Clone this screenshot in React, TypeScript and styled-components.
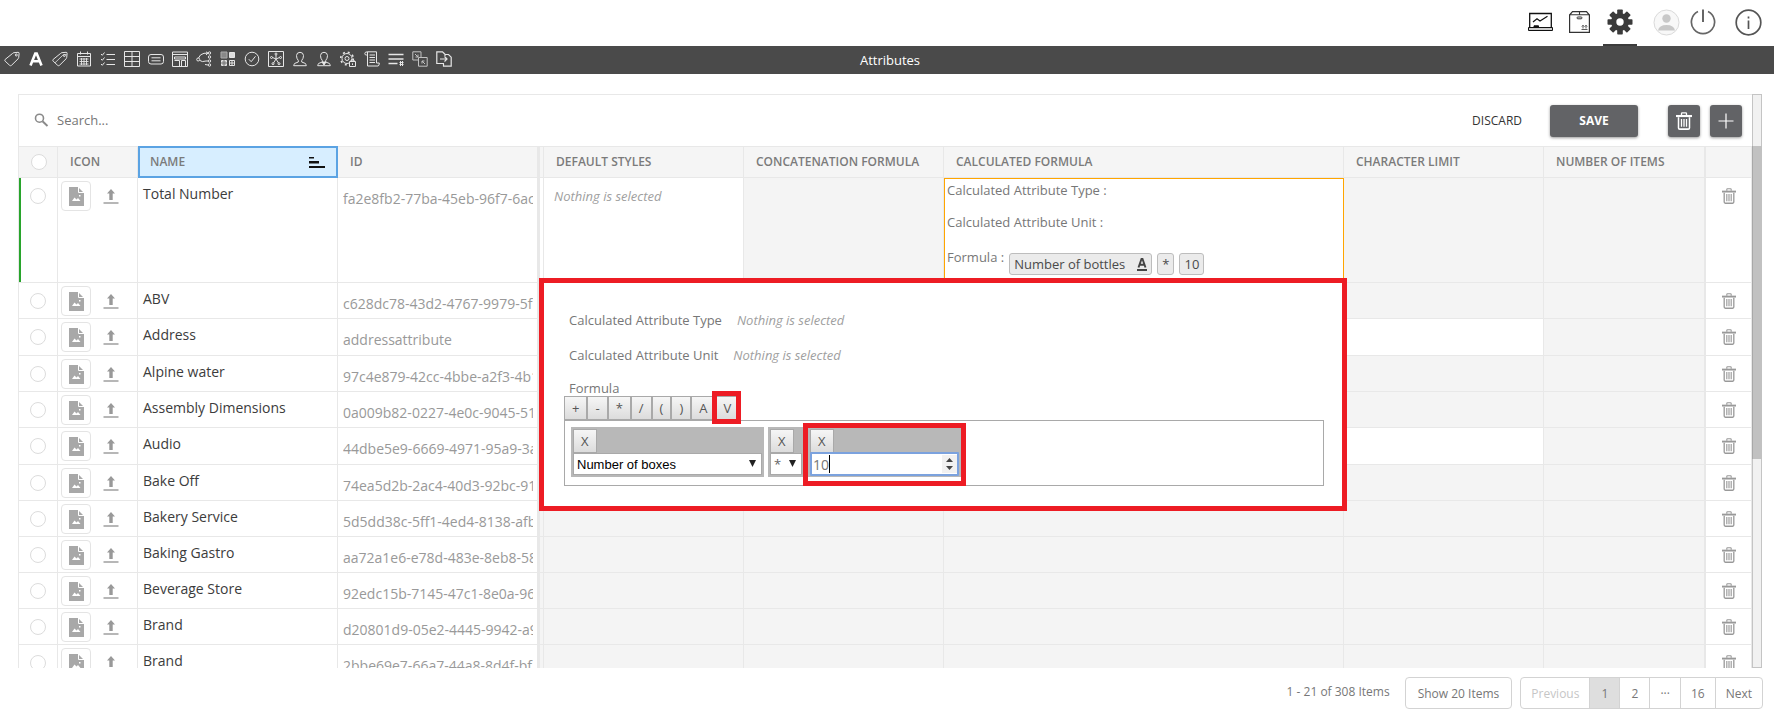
import React from "react";
import styled, { createGlobalStyle, css } from "styled-components";

const sans = `"Open Sans", "Noto Sans", "Liberation Sans", sans-serif`;

const GlobalStyle = createGlobalStyle`
  *, *::before, *::after { box-sizing: border-box; }
  body {
    margin: 0;
    background: #fff;
    color: #777;
    font-family: ${sans};
    font-size: 13px;
    line-height: 20px;
  }
  button, input, select { font-family: inherit; margin: 0; }
  svg { flex: none; }
`;

const Page = styled.div`
  height: 100vh;
  display: flex;
  flex-direction: column;
`;

/* ---------- top navigation ---------- */

const TopNav = styled.nav`
  display: flex;
  justify-content: flex-end;
  height: 46px;
  padding-right: 4px;
`;

const UserTools = styled.div`
  display: flex;
  padding-left: 15px;
`;

const NavButton = styled.button<{ $width: number; $active?: boolean }>`
  width: ${(p) => p.$width}px;
  height: 46px;
  padding: 0;
  display: flex;
  align-items: center;
  justify-content: center;
  border: 0;
  border-bottom: 2px solid ${(p) => (p.$active ? "#3c3c3c" : "transparent")};
  background: none;
`;

const TitleBar = styled.header`
  display: grid;
  grid-template-columns: 1fr auto 1fr;
  align-items: center;
  height: 28px;
  background: #4a4a4a;
  color: #fff;
`;

const ModuleList = styled.div`
  display: flex;
  padding-bottom: 2px;
`;

const ModuleButton = styled.button`
  flex: none;
  width: 24px;
  height: 24px;
  padding: 0;
  border: 0;
  background: none;
  display: flex;
  align-items: center;
  justify-content: center;
`;

const Title = styled.h1`
  margin: 0;
  padding-left: 6px;
  font-size: 13px;
  font-weight: 400;
`;

/* ---------- grid shell ---------- */

const GridArea = styled.main`
  flex: 1;
  min-height: 0;
  display: flex;
  margin: 20px 12px 0 18px;
`;

const GridPanel = styled.section`
  flex: 1;
  min-width: 0;
  overflow: hidden;
  border: 1px solid #e8e8e8;
  border-width: 1px 0 0 1px;
`;

const Toolbar = styled.div`
  display: flex;
  align-items: center;
  height: 52px;
  padding: 0 10px 0 15px;
  border-bottom: 1px solid #e8e8e8;
`;

const SearchLabel = styled.label`
  flex: 1;
  display: flex;
  align-items: center;
  gap: 8px;
  padding-bottom: 2px;
`;

const SearchInput = styled.input`
  flex: 1;
  border: 0;
  padding: 0;
  background: none;
  font-size: 13px;
  color: #777;
  &::placeholder { color: #777; opacity: 1; }
`;

const DiscardButton = styled.button`
  height: 32px;
  padding: 0 28px;
  border: 0;
  background: none;
  color: #333;
  font-size: 12px;
`;

const DarkButton = styled.button<{ $width: number }>`
  width: ${(p) => p.$width}px;
  height: 32px;
  padding: 0;
  display: flex;
  align-items: center;
  justify-content: center;
  border: 0;
  border-radius: 3px;
  background: #626366;
  box-shadow: 0 1px 3px rgba(0, 0, 0, 0.4);
  color: #fff;
  font-size: 12px;
  font-weight: 700;
`;

const IconActions = styled.div`
  display: flex;
  gap: 10px;
  margin-left: 30px;
`;

const ScrollTrack = styled.div`
  flex: none;
  width: 10px;
  padding-top: 51px;
  background: #f1f1f1;
  border: 1px solid #c4c4c4;
`;

const ScrollThumb = styled.div`
  height: 60%;
  max-height: 313px;
  margin: 0 -1px;
  background: #c1c1c1;
  border-left: 1px solid #a8a8a8;
`;

/* ---------- table ---------- */

const Table = styled.table`
  width: 100%;
  table-layout: fixed;
  border-collapse: separate;
  border-spacing: 0;
`;

const line = css`
  border: 0 solid #e8e8e8;
  border-right-width: 1px;
  border-bottom-width: 1px;
`;

const HeadCell = styled.th<{ $selected?: boolean; $edge?: number }>`
  ${line}
  position: relative;
  height: 31px;
  padding: 0 12px;
  border-right-width: ${(p) => p.$edge ?? 1}px;
  background: ${(p) => (p.$selected ? "#d7eeff" : "#f5f5f5")};
  color: #7b7b7b;
  font-size: 12px;
  font-weight: 600;
  text-align: left;
  white-space: nowrap;
  ${(p) =>
    p.$selected &&
    css`
      &::after {
        content: "";
        position: absolute;
        inset: -1px -1px -1px 0;
        border: 2px solid #5ba3e3;
      }
    `}
`;

const HeadInner = styled.span`
  display: flex;
  align-items: center;
  justify-content: space-between;
`;

const Row = styled.tr<{ $height: number }>`
  height: ${(p) => p.$height}px;
`;

const Cell = styled.td<{ $off?: boolean; $edge?: number; $marked?: boolean }>`
  ${line}
  padding: 0;
  border-right-width: ${(p) => p.$edge ?? 1}px;
  background: ${(p) => (p.$off ? "#f4f4f4" : "#fff")};
  box-shadow: ${(p) => (p.$marked ? "inset 2px 0 0 #28a42c" : "none")};
  vertical-align: top;
`;

const PickBox = styled.input`
  appearance: none;
  display: block;
  width: 16px;
  height: 16px;
  margin: 10px auto 0;
  border: 1px solid #dcdcdc;
  border-radius: 50%;
  background: #fff;
`;

const HeadPickBox = styled(PickBox)`
  margin: 0 auto;
`;

const IconPair = styled.div`
  display: flex;
  align-items: center;
  gap: 12px;
  padding: 3px 0 0 3px;
`;

const ThumbButton = styled.button`
  width: 30px;
  height: 30px;
  padding: 0;
  display: flex;
  align-items: center;
  justify-content: center;
  border: 1px solid #e4e4e4;
  border-radius: 4px;
  background: #fff;
`;

const PlainButton = styled.button`
  padding: 0;
  border: 0;
  background: none;
  display: flex;
`;

const NameText = styled.div`
  padding: 6px 5px 0;
  color: #3c3c3c;
  font-size: 14px;
  white-space: nowrap;
`;

const IdText = styled.div`
  margin: 11px 4px 0 5px;
  overflow: hidden;
  color: #999;
  font-size: 14px;
  white-space: nowrap;
`;

const Hint = styled.em`
  color: #a0a0a0;
`;

const StyleHint = styled.div`
  padding: 8px 10px 0;
`;

const TrashSlot = styled.div`
  display: flex;
  justify-content: center;
  padding-top: 10px;
`;

/* ---------- calculated formula cell ---------- */

const FormulaCell = styled.td`
  position: relative;
  padding: 1px 2px;
  border: 1px solid #ffa500;
  background: #fff;
  vertical-align: top;
`;

const FormulaLines = styled.div`
  display: flex;
  flex-direction: column;
  gap: 12px;
`;

const FormulaLine = styled.div`
  display: flex;
`;

const FormulaRow = styled(FormulaLine)`
  gap: 5px;
  padding-top: 3px;
`;

const Tag = styled.span`
  display: flex;
  align-items: center;
  gap: 12px;
  height: 22px;
  margin-top: 6px;
  padding: 0 4px;
  border: 1px solid #bdbdbd;
  border-radius: 3px;
  background: #ebebeb;
  color: #4a4a4a;
`;

const Popup = styled.div`
  position: absolute;
  z-index: 2;
  top: 99px;
  right: -4px;
  width: 808px;
  height: 233px;
  padding: 27px 18px 0 20px;
  border: 5px solid #ed1c24;
  background: #fff;
`;

const PopupRow = styled.div`
  display: flex;
  gap: 15px;
  height: 35px;
  padding-left: 5px;
`;

const PopupLabel = styled.div`
  padding-left: 5px;
  line-height: 16px;
`;

const OperatorBar = styled.div`
  display: flex;
`;

const GreyButton = styled.button`
  height: 24px;
  padding: 0 7px;
  border: 1px solid #a9a9a9;
  background: linear-gradient(#f6f6f6, #dcdcdc);
  color: #555;
  font-size: 13px;
  line-height: 20px;
`;

const Marked = styled.div<{ $inset: string }>`
  position: relative;
  display: flex;
  &::after {
    content: "";
    position: absolute;
    inset: ${(p) => p.$inset};
    border: 5px solid #ed1c24;
    pointer-events: none;
  }
`;

const Editor = styled.div`
  display: flex;
  gap: 4px;
  height: 66px;
  padding: 6px;
  border: 1px solid #a9a9a9;
`;

const Block = styled.div<{ $width: number }>`
  width: ${(p) => p.$width}px;
  height: 50px;
  padding: 2px;
  background: #b8b8b8;
`;

const FieldWrap = styled.div`
  position: relative;
  display: flex;
  align-items: center;
  height: 22px;
`;

const BlockSelect = styled.select<{ $system?: boolean }>`
  appearance: none;
  flex: 1;
  min-width: 0;
  height: 22px;
  padding: 0 3px;
  border: 1px solid #a9a9a9;
  border-radius: 0;
  background: #fff;
  color: ${(p) => (p.$system ? "#000" : "#666")};
  font-family: ${(p) => (p.$system ? `"Liberation Sans", sans-serif` : "inherit")};
  font-size: 13px;
`;

const Arrow = styled.svg`
  position: absolute;
  right: 6px;
  top: 7px;
  pointer-events: none;
`;

const NumberInput = styled.input`
  appearance: textfield;
  flex: 1;
  min-width: 0;
  height: 24px;
  padding: 0 1px;
  border: 2px solid #7ba2de;
  border-radius: 1px;
  outline: 0;
  background: #fff;
  color: #777;
  font-size: 14px;
  &::-webkit-inner-spin-button { appearance: none; }
`;

const Caret = styled.span`
  position: absolute;
  left: 19px;
  top: 2px;
  width: 1px;
  height: 18px;
  background: #000;
`;

const Spinner = styled.svg`
  position: absolute;
  right: 2px;
  top: 2px;
  background: #f1f1f1;
`;

/* ---------- footer ---------- */

const Footer = styled.footer`
  display: flex;
  justify-content: flex-end;
  gap: 8px;
  height: 55px;
  padding: 9px 11px 0 0;
  font-size: 12px;
`;

const Count = styled.span`
  padding-right: 7px;
  line-height: 30px;
`;

const boxed = css`
  height: 32px;
  border: 1px solid #d3d3d3;
  background: #fff;
  color: #777;
  font-size: 12px;
`;

const SizeButton = styled.button`
  ${boxed}
  padding: 0 12px;
  border-radius: 4px;
`;

const Pager = styled.nav`
  display: flex;
`;

const PageButton = styled.button<{ $current?: boolean }>`
  ${boxed}
  min-width: 31px;
  padding: 0 10px;
  margin-left: -1px;
  background: ${(p) => (p.$current ? "#dedede" : "#fff")};
  &:disabled { color: #c6c6c6; }
  &:first-child { margin-left: 0; border-radius: 4px 0 0 4px; }
  &:last-child { border-radius: 0 4px 4px 0; }
`;

/* ---------- icons ---------- */

const Stroke = ({ children, w = 1, color = "#e6e6e6" }: { children: React.ReactNode; w?: number; color?: string }) => (
  <svg width="16" height="16" viewBox="0 0 16 16" fill="none" stroke={color} strokeWidth={w} aria-hidden="true">
    {children}
  </svg>
);

const TrashIcon = ({ color, width, height }: { color: string; width: number; height: number }) => (
  <svg width={width} height={height} viewBox="0 0 16 17" preserveAspectRatio="none" fill="none" stroke={color} aria-hidden="true">
    <path d="M5.500 3V1.500Q5.500 .8 6.200 .8H9.800Q10.500 .8 10.500 1.500V3" strokeWidth="1.300" />
    <path d="M0 3.800H16" strokeWidth="2" />
    <path d="M2.500 5V15Q2.500 16.200 3.800 16.200H12.200Q13.500 16.200 13.500 15V5" strokeWidth="1.500" />
    <path d="M5.500 6.500V14M8 6.500V14M10.500 6.500V14" strokeWidth="1.300" />
  </svg>
);

const SearchIcon = () => (
  <svg width="15" height="14" viewBox="0 0 15 14" fill="none" stroke="#8a8a8a" aria-hidden="true">
    <circle cx="5.500" cy="5.200" r="4" strokeWidth="1.600" />
    <path d="M8.500 8.200L13.500 13" strokeWidth="1.900" />
  </svg>
);

const DocIcon = () => (
  <svg width="15" height="19" viewBox="0 0 15 19" aria-hidden="true">
    <path d="M0 0H9L15 6V19H0Z" fill="#a8a8a8" />
    <path d="M9.500 0V5.500H15" fill="none" stroke="#fff" strokeWidth="1" />
    <path d="M3 14L5.500 10.500L7.500 12.500L9 11L11.500 14Z" fill="#fff" />
    <rect x="10" y="8" width="1.500" height="1.500" fill="#fff" />
  </svg>
);

const UploadIcon = () => (
  <svg width="16" height="15" viewBox="0 0 16 15" aria-hidden="true">
    <path d="M8 0L12 4.500H9.700V11H6.300V4.500H4Z" fill="#999" />
    <path d="M.5 14H15.500" stroke="#999" strokeWidth="1.400" />
  </svg>
);

const SortIcon = () => (
  <svg width="16" height="11" viewBox="0 0 16 11" fill="#111" aria-hidden="true">
    <path d="M0 0H5V1.500H0ZM0 4H10V6.500H0ZM0 9H16V11H0Z" />
  </svg>
);

const MonitorIcon = () => (
  <svg width="25" height="20" viewBox="0 0 25 20" fill="none" stroke="#111" aria-hidden="true">
    <path d="M1.700 15V1.500H23.300V15" strokeWidth="1.300" />
    <path d="M.5 15.500H24.500V18.500H.5Z" />
    <path d="M1 17H24" strokeWidth="1" stroke="#999" />
    <path d="M5 10L9 6.800L12 9L19.500 4.200" strokeWidth="1.200" />
    <path d="M6 13.800H10.500V15H6Z" fill="#111" />
  </svg>
);

const BoxIcon = () => (
  <svg width="21" height="22" viewBox="0 0 21 22" fill="none" stroke="#333" aria-hidden="true">
    <path d="M.6 4L3.500 .7H17.500L20.400 4V21.300H.6Z" strokeWidth="1.200" />
    <path d="M.6 3.800H20.400M10.500 .7V3.800" strokeWidth="1.100" />
    <rect x="8" y="6" width="5" height="1.800" rx=".9" />
    <path d="M12.500 18.500H18.500M14 17.500V14.300M17 17.500V14.300M12.800 15.500L14 14.300L15.200 15.500M15.800 15.500L17 14.300L18.200 15.500" strokeWidth=".8" />
  </svg>
);

const GearIcon = () => (
  <svg width="26" height="26" viewBox="0 0 26 26" aria-hidden="true">
    <g fill="#3a3a3a">
      {[0, 45, 90, 135].map((angle) => (
        <rect key={angle} x="10.200" y=".5" width="5.600" height="25" rx=".8" transform={`rotate(${angle} 13 13)`} />
      ))}
      <circle cx="13" cy="13" r="9" />
    </g>
    <circle cx="13" cy="13" r="3.700" fill="#fff" />
  </svg>
);

const AvatarIcon = () => (
  <svg width="27" height="27" viewBox="0 0 27 27" aria-hidden="true">
    <circle cx="13.500" cy="13.500" r="12.500" fill="#f8f8f8" stroke="#dadada" />
    <circle cx="13.500" cy="9.500" r="4.200" fill="#c8c8c8" />
    <path d="M5 21.500Q6 16 13.500 16T22 21.500Z" fill="#c8c8c8" />
  </svg>
);

const PowerIcon = () => (
  <svg width="26" height="26" viewBox="0 0 26 26" fill="none" stroke="#666" strokeWidth="1.700" aria-hidden="true">
    <path d="M8 2.600A11.600 11.600 0 1 0 18 2.600" />
    <path d="M13 .5V13" strokeWidth="2" />
  </svg>
);

const InfoIcon = () => (
  <svg width="27" height="27" viewBox="0 0 27 27" fill="none" stroke="#555" strokeWidth="1.700" aria-hidden="true">
    <circle cx="13.500" cy="13.500" r="12.300" />
    <path d="M13.500 11.500V20M13.500 7.500V9.500" strokeWidth="1.700" />
  </svg>
);

const tagPath = "M8.500 2.500Q9 1.800 10 1.700L14 1.300Q15.200 1.200 15.100 2.500L14.700 6.500Q14.600 7.300 14 7.900L7.500 14.300Q6.500 15.200 5.500 14.200L1.200 10.200Q.3 9.300 1.200 8.400Z";
const personPath = "M6.300 9.500Q4.500 7.500 4.500 4.500Q4.800 1.300 8 1.300T11.500 4.500Q11.500 7.500 9.700 9.500V11L13 12.300Q14.300 13 14.300 14.700H1.700Q1.700 13 3 12.300L6.300 11Z";

const modules: { name: string; icon: React.ReactNode }[] = [
  { name: "Tags", icon: <Stroke><path d={tagPath} /><circle cx="12.300" cy="4" r="1" /></Stroke> },
  {
    name: "Attributes",
    icon: <Stroke><path d="M2.500 14.500L7.300 2.500H8.700L13.500 14.500M4.800 10.300H11.200" stroke="#fff" strokeWidth="2.600" /></Stroke>,
  },
  { name: "Tag groups", icon: <Stroke><path d={tagPath} /><circle cx="12.300" cy="4.500" r="1" /><path d="M3 11.800L10.500 4.500Q11.500 3.500 14.500 3.500" strokeWidth=".8" /></Stroke> },
  {
    name: "Calendar",
    icon: (
      <Stroke>
        <path d="M1.500 2.500H14.500V15H1.500ZM1.500 5.500H14.500M4.500 .5V3.500M11.500 .5V3.500" />
        <path d="M3.500 8H12.500M3.500 10.500H12.500M3.500 13H12.500M5.500 7V14M8 7V14M10.500 7V14" strokeWidth=".9" />
      </Stroke>
    ),
  },
  { name: "Tasks", icon: <Stroke><path d="M1 3L2.300 4.300L4.500 1.500M1 8L2.300 9.300L4.500 6.500M1 13L2.300 14.300L4.500 11.500M6.500 3.500H15M6.500 8.500H15M6.500 13.500H15" /></Stroke> },
  { name: "Tables", icon: <Stroke><path d="M.5 .5H15.500V15.500H.5ZM8 .5V15.500M.5 5.500H15.500M.5 10.500H15.500" /></Stroke> },
  { name: "Fields", icon: <Stroke><rect x=".5" y="3.500" width="15" height="9.500" rx="2.500" /><path d="M3.500 6.800H12.500M3.500 9.800H12.500" /></Stroke> },
  { name: "Templates", icon: <Stroke><path d="M.5 1H15.500V15.500H.5ZM.5 3.500H15.500M2.500 6H13.500V8H2.500ZM2.500 9.500H7.500V15M9.500 15V9.500H13.500V15" /></Stroke> },
  {
    name: "Relations",
    icon: (
      <Stroke>
        <circle cx="2.200" cy="8.500" r="1.500" /><circle cx="13.500" cy="2" r="1.200" /><circle cx="13.500" cy="6" r="1.200" />
        <circle cx="13.500" cy="10" r="1.200" /><circle cx="13.500" cy="14" r="1.200" />
        <path d="M2.500 7Q4 3 8 2.300L12 2.200M3.500 9.300Q6 11.500 10 10L12 10M10 .8L12 2.200L10 4M9 13.500L12 14" />
      </Stroke>
    ),
  },
  {
    name: "Patterns",
    icon: (
      <Stroke>
        <path d="M1 1H7V7H1Z" fill="#888" stroke="#aaa" /><path d="M9.500 1.500H14.500V6.500H9.500Z" fill="#ddd" /><path d="M1.500 9.500H6.500V14.500H1.500Z" fill="#bbb" />
        <path d="M9.500 9.500H14.500V14.500H9.500ZM12 9V15M9 12H15" /><path d="M4 9V15M1 12H7" stroke="#777" />
      </Stroke>
    ),
  },
  { name: "Approvals", icon: <Stroke><circle cx="8" cy="8" r="6.800" /><path d="M4.800 8.200L7.200 10.700L11.500 5.300" /></Stroke> },
  {
    name: "Network",
    icon: (
      <Stroke>
        <path d="M.5 .5H15.500V15.500H.5ZM8 4V8L4.500 6.500M8 8L11.500 6.500M8 8L5.500 12M8 8L10.500 12" />
        <circle cx="8" cy="3" r="1" /><circle cx="3.500" cy="6.500" r="1" /><circle cx="12.500" cy="6.500" r="1" /><circle cx="5" cy="12.700" r="1" /><circle cx="11" cy="12.700" r="1" />
      </Stroke>
    ),
  },
  { name: "Users", icon: <Stroke><path d={personPath} /></Stroke> },
  { name: "Roles", icon: <Stroke><path d={personPath} /><path d="M6 11L8 14L10 11Z" fill="#eee" /></Stroke> },
  {
    name: "Permissions",
    icon: (
      <Stroke>
        <circle cx="7" cy="7.500" r="5" /><circle cx="7" cy="7.500" r="2" />
        <circle cx="7" cy="7.500" r="6.300" strokeDasharray="2 2.950" strokeWidth="1.600" />
        <path d="M9.500 10.500H15.500V15.500H9.500Z" fill="#4a4a4a" /><path d="M11 10.500V9H14V10.500M12.500 12.300V14" />
      </Stroke>
    ),
  },
  { name: "Scripts", icon: <Stroke><path d="M3.500 4V.8H12.500V12M3.500 4V15H14Q15.300 15 15.300 12H12.500M3.500 .8Q.8 .8 .8 2.500T2.500 4H3.500M5.500 4H11M5.500 6.500H11M5.500 9H11M5.500 11.500H11" /></Stroke> },
  { name: "Lists", icon: <Stroke w={1.600}><path d="M.5 3.500H15.500M.5 8H15.500M.5 12.500H9.500" /><path d="M11.500 11.500H15.500M11.500 13.500H15.500M12.500 10V15M14.500 10V15" strokeWidth="1" /></Stroke> },
  { name: "Mappings", icon: <Stroke color="#c2c2c2"><path d="M.8 .8H9V6M.8 .8V9H6.500M6.500 6.500H15.200V15.200H6.500ZM3 3L6 6M6 3.500V6H3.500M13 13L10 10M10 12.500V10H12.500" /></Stroke> },
  { name: "Exports", icon: <Stroke><path d="M8 12.500H.8V.8H6.500L9 3.300V5M9 3.500H12.500L15.200 6.200V15.200H7.500V12.500M4 8H11M8.500 5.500L11 8L8.500 10.500" strokeWidth="1.200" /></Stroke> },
];

/* ---------- data ---------- */

const records: { name: string; id: string; limitEditable?: boolean; isNew?: boolean }[] = [
  { name: "Total Number", id: "fa2e8fb2-77ba-45eb-96f7-6ac", isNew: true },
  { name: "ABV", id: "c628dc78-43d2-4767-9979-5f" },
  { name: "Address", id: "addressattribute", limitEditable: true },
  { name: "Alpine water", id: "97c4e879-42cc-4bbe-a2f3-4b1" },
  { name: "Assembly Dimensions", id: "0a009b82-0227-4e0c-9045-51" },
  { name: "Audio", id: "44dbe5e9-6669-4971-95a9-3a", limitEditable: true },
  { name: "Bake Off", id: "74ea5d2b-2ac4-40d3-92bc-91" },
  { name: "Bakery Service", id: "5d5dd38c-5ff1-4ed4-8138-afb" },
  { name: "Baking Gastro", id: "aa72a1e6-e78d-483e-8eb8-58" },
  { name: "Beverage Store", id: "92edc15b-7145-47c1-8e0a-96" },
  { name: "Brand", id: "d20801d9-05e2-4445-9942-a9" },
  { name: "Brand", id: "2bbe69e7-66a7-44a8-8d4f-bf" },
];

const columnWidths = [39, 80, 200, 202, 4, 200, 200, 400, 200, 0, 46];

const DownArrow = () => (
  <Arrow width="7" height="7" viewBox="0 0 7 7" fill="#222" aria-hidden="true">
    <path d="M0 0H7L3.500 7Z" />
  </Arrow>
);

function FormulaPopup() {
  return (
    <Popup>
      <PopupRow>
        <span>Calculated Attribute Type</span>
        <Hint>Nothing is selected</Hint>
      </PopupRow>
      <PopupRow>
        <span>Calculated Attribute Unit</span>
        <Hint>Nothing is selected</Hint>
      </PopupRow>
      <PopupLabel>Formula</PopupLabel>
      <OperatorBar>
        {["+", "-", "*", "/", "(", ")", "A"].map((op) => (
          <GreyButton key={op}>{op}</GreyButton>
        ))}
        <Marked $inset="-5px -2px -4px -4px">
          <GreyButton>V</GreyButton>
        </Marked>
      </OperatorBar>
      <Editor>
        <Block $width={193}>
          <GreyButton aria-label="Remove attribute">X</GreyButton>
          <FieldWrap>
            <BlockSelect $system aria-label="Attribute" defaultValue="boxes">
              <option value="boxes">Number of boxes</option>
            </BlockSelect>
            <DownArrow />
          </FieldWrap>
        </Block>
        <Block $width={36}>
          <GreyButton aria-label="Remove operator">X</GreyButton>
          <FieldWrap>
            <BlockSelect aria-label="Operator" defaultValue="*">
              <option value="*">*</option>
            </BlockSelect>
            <DownArrow />
          </FieldWrap>
        </Block>
        <Marked $inset="-4px -5px -7px">
          <Block $width={153}>
            <GreyButton aria-label="Remove value">X</GreyButton>
            <FieldWrap>
              <NumberInput type="number" aria-label="Value" defaultValue={10} />
              <Caret />
              <Spinner width="15" height="18" viewBox="0 0 15 18" fill="#444" aria-hidden="true">
                <path d="M4 7H11L7.500 3ZM4 11H11L7.500 15Z" />
              </Spinner>
            </FieldWrap>
          </Block>
        </Marked>
      </Editor>
    </Popup>
  );
}

export default function App() {
  return (
    <Page>
      <GlobalStyle />
      <TopNav aria-label="Main">
        <NavButton $width={31} aria-label="Dashboard"><MonitorIcon /></NavButton>
        <NavButton $width={47} aria-label="Products"><BoxIcon /></NavButton>
        <NavButton $width={34} $active aria-label="Settings"><GearIcon /></NavButton>
        <UserTools>
          <NavButton $width={28} aria-label="Profile"><AvatarIcon /></NavButton>
          <NavButton $width={46} aria-label="Log out"><PowerIcon /></NavButton>
          <NavButton $width={44} aria-label="Information"><InfoIcon /></NavButton>
        </UserTools>
      </TopNav>
      <TitleBar>
        <ModuleList>
          {modules.map((m) => (
            <ModuleButton key={m.name} aria-label={m.name}>{m.icon}</ModuleButton>
          ))}
        </ModuleList>
        <Title>Attributes</Title>
      </TitleBar>

      <GridArea>
        <GridPanel>
          <Toolbar>
            <SearchLabel>
              <SearchIcon />
              <SearchInput type="text" placeholder="Search..." aria-label="Search" />
            </SearchLabel>
            <DiscardButton>DISCARD</DiscardButton>
            <DarkButton $width={88}>SAVE</DarkButton>
            <IconActions>
              <DarkButton $width={32} aria-label="Delete"><TrashIcon color="#fff" width={16} height={18} /></DarkButton>
              <DarkButton $width={32} aria-label="Add">
                <Stroke color="#fff" w={1.200}><path d="M8 .5V15.500M.5 8H15.500" /></Stroke>
              </DarkButton>
            </IconActions>
          </Toolbar>

          <Table>
            <colgroup>
              {columnWidths.map((w, i) => (
                <col key={i} width={w || undefined} />
              ))}
            </colgroup>
            <thead>
              <tr>
                <HeadCell><HeadPickBox type="checkbox" aria-label="Select all" /></HeadCell>
                <HeadCell>ICON</HeadCell>
                <HeadCell $selected><HeadInner>NAME <SortIcon /></HeadInner></HeadCell>
                <HeadCell $edge={3}>ID</HeadCell>
                <HeadCell />
                <HeadCell>DEFAULT STYLES</HeadCell>
                <HeadCell>CONCATENATION FORMULA</HeadCell>
                <HeadCell>CALCULATED FORMULA</HeadCell>
                <HeadCell>CHARACTER LIMIT</HeadCell>
                <HeadCell $edge={2}>NUMBER OF ITEMS</HeadCell>
                <HeadCell />
              </tr>
            </thead>
            <tbody>
              {records.map((r, i) => (
                <Row key={i} $height={r.isNew ? 105 : r.limitEditable ? 37 : 36}>
                  <Cell $marked={r.isNew}><PickBox type="checkbox" aria-label={`Select ${r.name}`} /></Cell>
                  <Cell>
                    <IconPair>
                      <ThumbButton aria-label="Icon"><DocIcon /></ThumbButton>
                      <PlainButton aria-label="Upload"><UploadIcon /></PlainButton>
                    </IconPair>
                  </Cell>
                  <Cell><NameText>{r.name}</NameText></Cell>
                  <Cell $edge={3}><IdText>{r.id}</IdText></Cell>
                  <Cell $off={!r.isNew} />
                  <Cell $off={!r.isNew}>
                    {r.isNew && <StyleHint><Hint>Nothing is selected</Hint></StyleHint>}
                  </Cell>
                  <Cell $off />
                  {r.isNew ? (
                    <FormulaCell>
                      <FormulaLines>
                        <FormulaLine>Calculated Attribute Type :</FormulaLine>
                        <FormulaLine>Calculated Attribute Unit :</FormulaLine>
                        <FormulaRow>
                          <span>Formula :</span>
                          <Tag>
                            Number of bottles
                            <svg width="10" height="13" viewBox="0 0 10 13" fill="none" stroke="#444" aria-hidden="true">
                              <path d="M1.500 9.500L4.500 1H5.500L8.500 9.500M2.500 6.800H7.500" strokeWidth="1.900" />
                              <path d="M0 12H10" strokeWidth="2" />
                            </svg>
                          </Tag>
                          <Tag>*</Tag>
                          <Tag>10</Tag>
                        </FormulaRow>
                      </FormulaLines>
                      <FormulaPopup />
                    </FormulaCell>
                  ) : (
                    <Cell $off />
                  )}
                  <Cell $off={!r.limitEditable} />
                  <Cell $off $edge={2} />
                  <Cell>
                    <TrashSlot>
                      <PlainButton aria-label={`Delete ${r.name}`}><TrashIcon color="#999" width={14} height={16} /></PlainButton>
                    </TrashSlot>
                  </Cell>
                </Row>
              ))}
            </tbody>
          </Table>
        </GridPanel>
        <ScrollTrack><ScrollThumb /></ScrollTrack>
      </GridArea>

      <Footer>
        <Count>1 - 21 of 308 Items</Count>
        <SizeButton>Show 20 Items</SizeButton>
        <Pager aria-label="Pages">
          <PageButton disabled>Previous</PageButton>
          <PageButton $current>1</PageButton>
          <PageButton>2</PageButton>
          <PageButton>···</PageButton>
          <PageButton>16</PageButton>
          <PageButton>Next</PageButton>
        </Pager>
      </Footer>
    </Page>
  );
}
